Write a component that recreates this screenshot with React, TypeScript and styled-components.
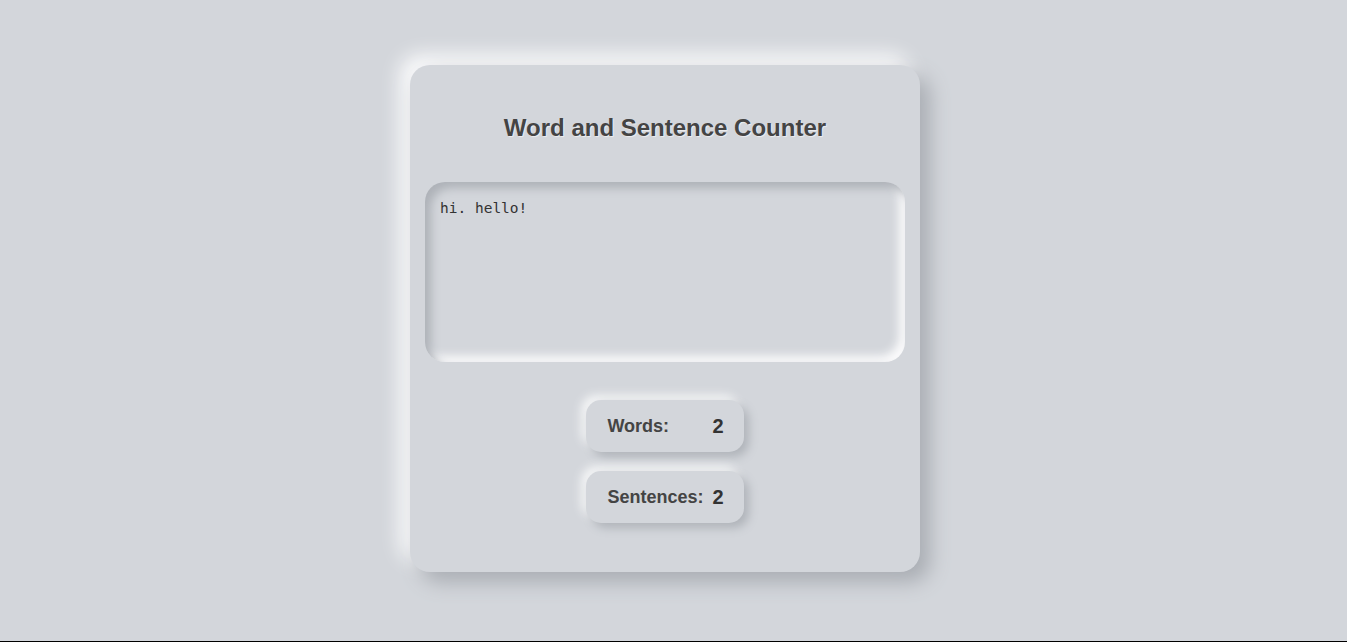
import React, { useState } from "react";
import styled, { createGlobalStyle } from "styled-components";

const Global = createGlobalStyle`
  html { background: #000; }
  body {
    margin: 0;
    height: 641px;
    background: #d3d6db;
    font-family: "Liberation Sans", Arial, sans-serif;
    overflow: hidden;
  }
`;

const Page = styled.main`
  display: flex;
  justify-content: center;
  align-items: flex-start;
  padding: 65px 17px 0 0;
`;

const Card = styled.section`
  width: 510px;
  box-sizing: border-box;
  padding: 15px 15px 49px;
  background: #d3d6db;
  border-radius: 20px;
  box-shadow: 10px 10px 20px #a9adb3, -10px -10px 20px #fcfcfd;
  display: flex;
  flex-direction: column;
  align-items: center;
`;

const Title = styled.h1`
  margin: 34px 0 40px;
  font-size: 24px;
  line-height: 28px;
  font-weight: 700;
  color: #444;
  text-shadow: 1px 1px 1px rgba(255, 255, 255, 0.6);
`;

const TextArea = styled.textarea`
  width: 480px;
  height: 180px;
  box-sizing: border-box;
  padding: 16px 15px 15px;
  border: none;
  outline: none;
  resize: none;
  border-radius: 20px;
  background: #d3d6db;
  color: #333;
  font-family: "DejaVu Sans Mono", "Liberation Mono", monospace;
  font-size: 14.5px;
  line-height: 20px;
  box-shadow: inset 6px 6px 10px #aeb2b8, inset -6px -6px 10px #fbfbfc;
`;

const Stats = styled.div`
  margin-top: 38px;
  display: flex;
  flex-direction: column;
  gap: 19px;
`;

const Stat = styled.div`
  display: flex;
  align-items: center;
  justify-content: space-between;
  gap: 9px;
  height: 52px;
  box-sizing: border-box;
  padding: 0 20px 0 21px;
  border-radius: 15px;
  background: #d3d6db;
  box-shadow: 5px 5px 10px #b0b4ba, -5px -5px 10px #f4f5f6;
`;

const Label = styled.span`
  font-size: 18px;
  font-weight: 700;
  color: #444;
`;

const Value = styled.span`
  font-size: 20px;
  font-weight: 700;
  color: #333;
`;

export default function App() {
  const [text, setText] = useState("hi. hello!");
  const words = text.trim() ? text.trim().split(/\s+/).length : 0;
  const sentences = (text.match(/[^.!?]+[.!?]+/g) || []).length;
  return (
    <>
      <Global />
      <Page>
        <Card>
          <Title>Word and Sentence Counter</Title>
          <TextArea value={text} onChange={(e) => setText(e.target.value)} />
          <Stats>
            <Stat>
              <Label>Words:</Label>
              <Value>{words}</Value>
            </Stat>
            <Stat>
              <Label>Sentences:</Label>
              <Value>{sentences}</Value>
            </Stat>
          </Stats>
        </Card>
      </Page>
    </>
  );
}
